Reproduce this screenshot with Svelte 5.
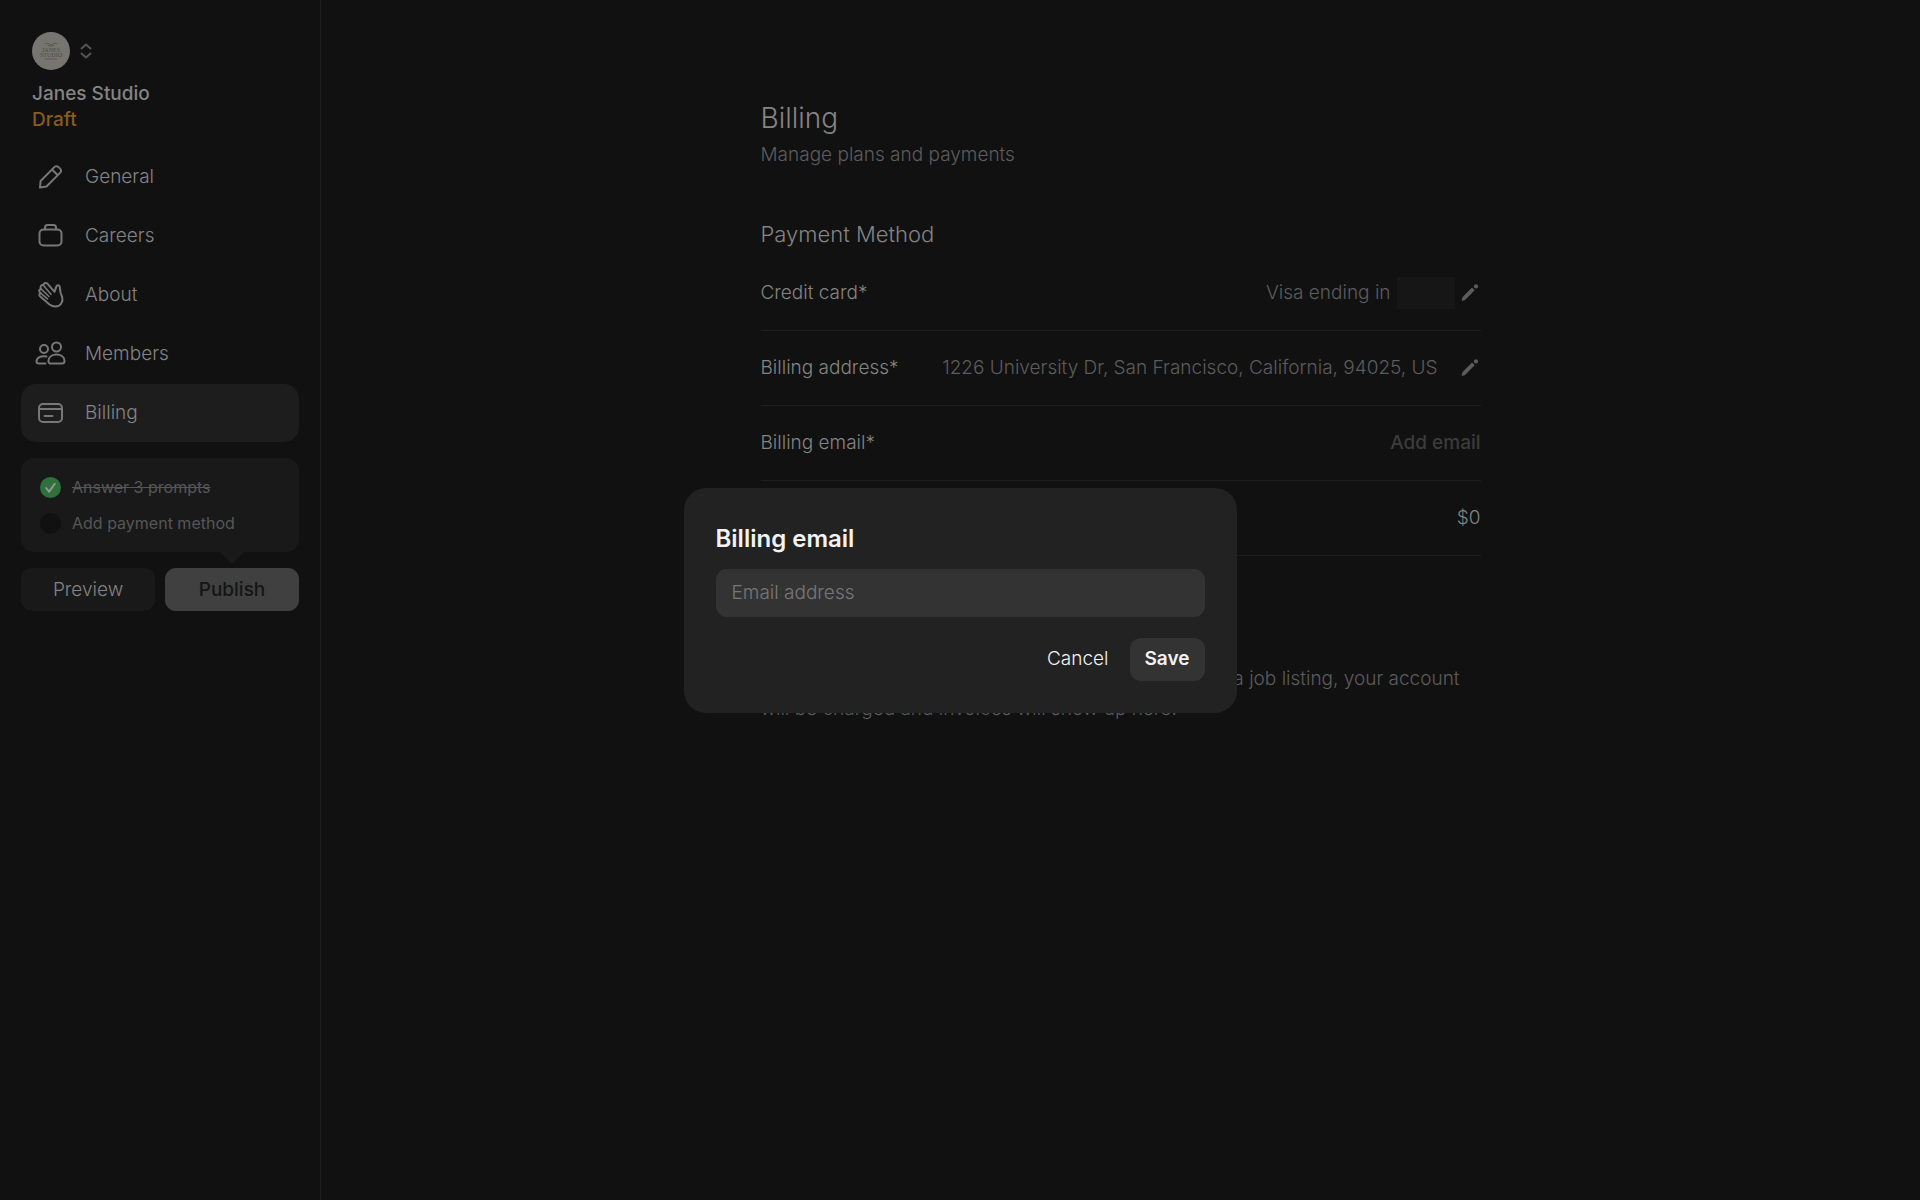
<script>
	const navItems = [
		{ label: 'General', icon: 'pencil' },
		{ label: 'Careers', icon: 'briefcase' },
		{ label: 'About', icon: 'hand' },
		{ label: 'Members', icon: 'people' },
		{ label: 'Billing', icon: 'card' }
	];

	const tasks = [
		{ label: 'Answer 3 prompts', done: true },
		{ label: 'Add payment method', done: false }
	];

	let current = $state('Billing');
	let showModal = $state(true);
	let email = $state('');

	const closeModal = () => {
		showModal = false;
	};

	const saveEmail = (event) => {
		event.preventDefault();
		closeModal();
	};
</script>

{#snippet editIcon()}
	<svg class="edit-icon" viewBox="0 0 20 20" aria-hidden="true">
		<path d="M.8 17.800c-.2-1.800.3-3.200 1.300-4.300L11 4.600l2.700 2.700-8.900 8.900c-1.100 1.100-2.400 1.600-4 1.600z" />
		<circle cx="15" cy="3.400" r="2.100" />
	</svg>
{/snippet}

<div class="layout">
	<aside>
		<header>
			<button class="workspace" aria-label="Switch workspace">
				<span class="avatar">
					<svg viewBox="0 0 38 38" aria-hidden="true">
						<path d="M13 11.500q3-1 6 1.500q3-2.500 6-1.500M16 13.500q3 1.500 6 0M13 27h12" />
						<text x="19" y="20">JANES</text>
						<text x="19" y="25">STUDIO</text>
					</svg>
				</span>
				<svg class="chevrons" viewBox="0 0 12 16" aria-hidden="true">
					<path d="M1.500 5.500L6 1.500l4.500 4M1.500 10.500l4.500 4 4.500-4" />
				</svg>
			</button>
			<strong>Janes Studio</strong>
			<span class="status">Draft</span>
		</header>

		<nav>
			{#each navItems as item}
				<a
					href="#{item.icon}"
					class:active={item.label === current}
					onclick={() => (current = item.label)}
				>
					<svg viewBox="0 0 32 32" aria-hidden="true">
						{#if item.icon === 'pencil'}
							<path d="M6 26.500l.6-6.500L20.600 5.900a2.600 2.600 0 0 1 3.700 0l2 2a2.600 2.600 0 0 1 0 3.700L12.500 25.500zM18 8.500l5.800 5.800" />
						{:else if item.icon === 'briefcase'}
							<rect x="5.500" y="9.500" width="22" height="16" rx="4" />
							<path d="M11 9.500V7.500a2.500 2.500 0 0 1 2.500-2.500h6A2.500 2.500 0 0 1 22 7.500v2" />
						{:else if item.icon === 'hand'}
							<path d="M20.500 12.800l1.800-5.200c.7-2 3.200-1.700 3.500.4l.7 5.500 1.700 4.500c1.200 4.800-1.700 9.300-6.500 9.500-2.500.1-4.300-.7-6.200-2L6.500 17.800c-1.900-1.400-1.200-3.600.4-3.400L6 13.500c-1.600-1.600-.6-3.700 1-3.600-1.300-2.300.5-4.700 2.300-3.700.3-2.400 2.900-3 4.300-1.400z" />
							<path class="thin" d="M6.900 14.400l6.600 5.400M7 9.900l8 7.600M9.300 6.200l7.700 9.100" />
						{:else if item.icon === 'people'}
							<circle cx="22.500" cy="9" r="4.500" />
							<path d="M14.500 23c0-4 3.500-6.500 8-6.500s8 2.500 8 6.500c0 1.800-.8 2.500-2.500 2.500h-11c-1.700 0-2.500-.7-2.500-2.500z" />
							<circle cx="10" cy="11" r="4" />
							<path d="M12.500 18.500C7 17.500 2.500 19.500 2.500 23.500c0 1.500.6 2 2 2h7" />
						{:else}
							<rect x="5" y="7" width="23" height="18" rx="4" />
							<path d="M5 12h23M10.500 19h8" />
						{/if}
					</svg>
					{item.label}
				</a>
			{/each}
		</nav>

		<ul>
			{#each tasks as task}
				<li class:done={task.done}>
					<span class="tick">
						{#if task.done}
							<svg viewBox="0 0 22 22" aria-hidden="true">
								<path d="M6.500 11.500l3 4L15.500 7" />
							</svg>
						{/if}
					</span>
					{task.label}
				</li>
			{/each}
		</ul>

		<div class="actions">
			<button>Preview</button>
			<button class="publish">Publish</button>
		</div>
	</aside>

	<main>
		<h1>Billing</h1>
		<p>Manage plans and payments</p>

		<h2>Payment Method</h2>
		<dl>
			<div>
				<dt>Credit card*</dt>
				<dd>
					Visa ending in <span class="redacted"></span>
					<button class="edit" aria-label="Edit credit card">{@render editIcon()}</button>
				</dd>
			</div>
			<div>
				<dt>Billing address*</dt>
				<dd class="address">
					1226 University Dr, San Francisco, California, 94025, US
					<button class="edit" aria-label="Edit billing address">{@render editIcon()}</button>
				</dd>
			</div>
			<div>
				<dt>Billing email*</dt>
				<dd><button class="add" onclick={() => (showModal = true)}>Add email</button></dd>
			</div>
			<div>
				<dt>Balance</dt>
				<dd class="amount">$0</dd>
			</div>
		</dl>

		<h2>Invoices</h2>
		<p class="invoices">
			You don’t have any invoices yet. As soon as you post a job listing, your account will be
			charged and invoices will show up here.
		</p>
	</main>
</div>

{#if showModal}
	<div class="backdrop">
		<form class="modal" role="dialog" aria-labelledby="modal-title" onsubmit={saveEmail}>
			<label id="modal-title" for="email">Billing email</label>
			<input id="email" type="email" placeholder="Email address" bind:value={email} />
			<div class="buttons">
				<button type="button" onclick={closeModal}>Cancel</button>
				<button class="save">Save</button>
			</div>
		</form>
	</div>
{/if}

<style>
	:global(body) {
		background: #111;
	}

	.layout,
	.backdrop {
		font-family: Inter, sans-serif;
		font-size: 19px;
		font-weight: 300;
		line-height: 26px;
		color: #848484;
	}

	.layout {
		display: flex;
		min-height: 100vh;
	}

	button {
		font: inherit;
		color: inherit;
		background: none;
		border: none;
		padding: 0;
		cursor: pointer;
	}

	svg {
		fill: none;
		stroke: currentColor;
		stroke-width: 2;
		stroke-linecap: round;
		stroke-linejoin: round;
	}

	aside {
		box-sizing: border-box;
		flex: 0 0 321px;
		padding: 32px 21px;
		border-right: 1px solid #1e1e1e;
	}

	header {
		display: flex;
		flex-direction: column;
		align-items: flex-start;
		padding-left: 11px;
		margin-bottom: 15px;
	}

	strong,
	.status {
		font-weight: 500;
	}

	.status {
		color: #875c20;
	}

	.workspace {
		display: flex;
		align-items: center;
		gap: 10px;
		margin-bottom: 11px;
	}

	.avatar {
		width: 38px;
		height: 38px;
		border-radius: 50%;
		background: #777570;
	}

	.avatar svg {
		display: block;
		stroke: #5c5a56;
		stroke-width: 1;
	}

	.avatar text {
		font-family: 'Liberation Serif', serif;
		font-size: 6px;
		text-anchor: middle;
		fill: #4c4a46;
		stroke: none;
	}

	.chevrons {
		width: 12px;
		height: 16px;
		color: #555;
	}

	nav {
		display: flex;
		flex-direction: column;
		gap: 1px;
	}

	nav a {
		display: flex;
		align-items: center;
		gap: 19px;
		height: 58px;
		padding-left: 13px;
		border-radius: 15px;
		color: inherit;
		text-decoration: none;
	}

	nav a.active {
		background: #1d1d1d;
	}

	nav svg {
		width: 32px;
		height: 32px;
		color: #777;
	}

	.thin {
		stroke-width: 1.6;
	}

	ul {
		position: relative;
		display: flex;
		flex-direction: column;
		gap: 10px;
		margin: 16px 0;
		padding: 16px 19px;
		border-radius: 13px;
		background: #191919;
		list-style: none;
		font-size: 16px;
		font-weight: 400;
		color: #565656;
	}

	/* pointer towards the publish button */
	ul::after {
		content: '';
		position: absolute;
		top: 100%;
		right: 55px;
		border: 12px solid transparent;
		border-top-color: #191919;
		border-bottom: none;
	}

	li {
		display: flex;
		align-items: center;
		gap: 11px;
	}

	.done {
		text-decoration: line-through;
	}

	.tick {
		width: 21px;
		height: 21px;
		border-radius: 50%;
		background: #111;
	}

	.tick svg {
		display: block;
		color: #999;
	}

	.done .tick {
		background: #30703c;
	}

	.actions {
		display: flex;
		gap: 10px;
	}

	.actions button {
		flex: 1;
		height: 43px;
		border-radius: 11px;
		background: #191919;
	}

	.actions .publish {
		background: #404040;
		color: #151515;
		font-weight: 500;
	}

	main {
		box-sizing: border-box;
		width: 100%;
		max-width: 720px;
		margin: 0 auto;
		padding-top: 101px;
	}

	h1,
	h2,
	p,
	dl,
	dd {
		margin: 0;
		font-weight: 300;
	}

	h1 {
		font-size: 28px;
		line-height: 34px;
		margin-bottom: 7px;
	}

	h2 {
		font-size: 22px;
		line-height: 28px;
		margin-top: 52px;
	}

	p,
	dd {
		color: #5c5c5c;
	}

	dl {
		margin-top: 8px;
	}

	dl div {
		display: flex;
		justify-content: space-between;
		align-items: center;
		height: 74px;
		border-bottom: 1px solid #1e1e1e;
	}

	dd {
		display: flex;
		align-items: center;
		gap: 6px;
	}

	.address {
		gap: 23px;
	}

	.amount {
		color: inherit;
	}

	.redacted {
		width: 58px;
		height: 32px;
		background: #161616;
	}

	.edit,
	.edit-icon {
		display: block;
		width: 20px;
		height: 20px;
	}

	.edit-icon {
		fill: currentColor;
		stroke: none;
	}

	.add {
		font-weight: 500;
		color: #3c3c3c;
	}

	.invoices {
		margin-top: 28px;
		line-height: 30px;
	}

	.backdrop {
		position: fixed;
		inset: 0;
		display: flex;
		align-items: center;
		justify-content: center;
	}

	.modal {
		box-sizing: border-box;
		width: 553px;
		max-width: 100%;
		padding: 32px;
		border-radius: 22px;
		background: #222;
		color: #f2f2f2;
	}

	.modal label {
		display: block;
		font-size: 24px;
		line-height: 38px;
		font-weight: 600;
		margin-bottom: 11px;
	}

	.modal input {
		box-sizing: border-box;
		width: 100%;
		height: 48px;
		padding: 0 16px;
		border: none;
		border-radius: 11px;
		outline: none;
		background: #333;
		color: inherit;
		font: inherit;
	}

	.modal input::placeholder {
		color: #777;
		opacity: 1;
	}

	.buttons {
		display: flex;
		justify-content: flex-end;
		gap: 21px;
		margin-top: 21px;
	}

	.buttons button {
		height: 43px;
	}

	.buttons .save {
		padding: 0 15px;
		border-radius: 11px;
		background: #333;
		font-weight: 600;
	}
</style>
